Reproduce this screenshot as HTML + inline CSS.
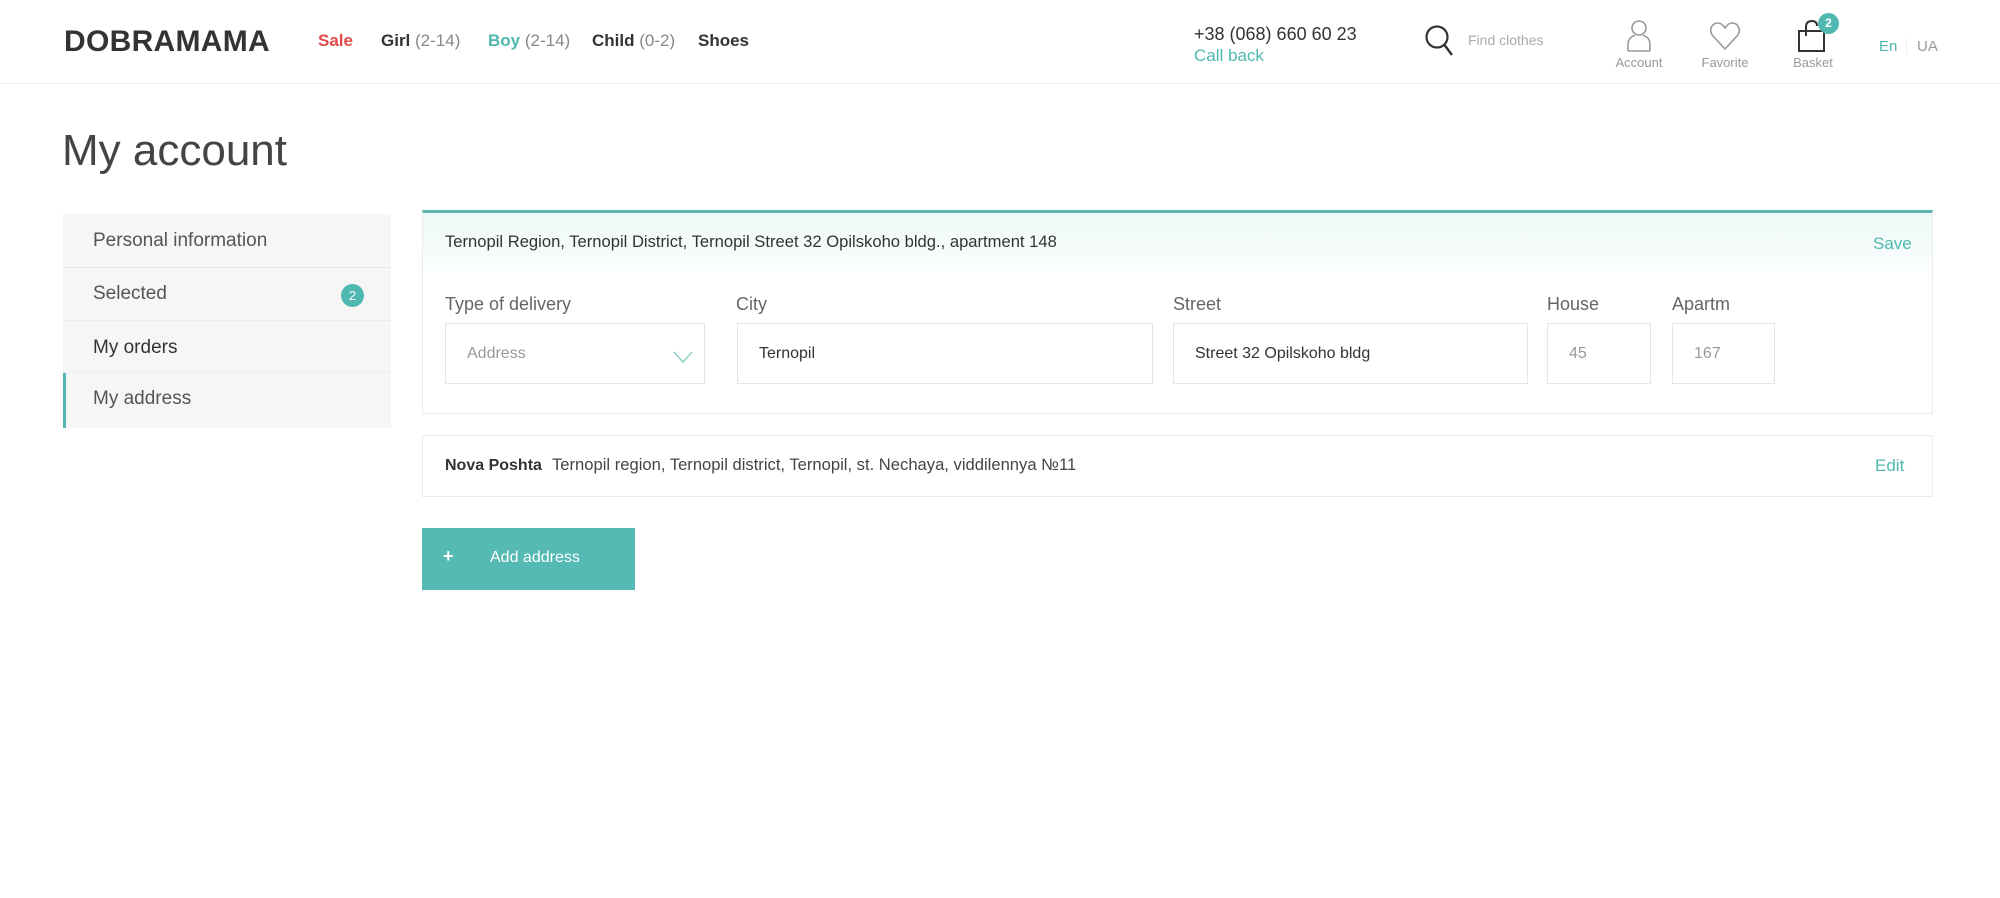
<!DOCTYPE html>
<html><head><meta charset="utf-8"><style>
*{box-sizing:border-box;margin:0;padding:0}
body{width:2000px;height:898px;background:#fff;font-family:"Liberation Sans",sans-serif;color:#333;position:relative;overflow:hidden}
.a{position:absolute;white-space:nowrap}
.teal{color:#4fb8b0}
.hdr{position:absolute;left:0;top:0;width:2000px;height:84px;border-bottom:1px solid #ececec}
.logo{left:64px;top:25px;font-size:30px;font-weight:bold;letter-spacing:0.3px;color:#333}
.nav{top:31px;font-size:17px;font-weight:bold;color:#333}
.nav span{font-weight:normal;color:#888}
.lbl{font-size:13px;color:#999;text-align:center;width:80px}
.side{position:absolute;left:63px;top:214px;width:328px;height:214px;background:#f6f6f6}
.si{position:absolute;left:30px;font-size:19px;color:#555}
.box{position:absolute;border:1px solid #ebebeb;background:#fff}
.flbl{font-size:18px;color:#666;top:294px}
.inp{position:absolute;top:323px;height:61px;border:1px solid #e6e6e6;background:#fff;font-size:16px;padding:21px 0 0 21px;color:#333}
</style></head><body>
<div class="hdr"></div>
<div class="a logo">DOBRAMAMA</div>
<div class="a nav" style="left:318px;color:#e04a48">Sale</div>
<div class="a nav" style="left:381px">Girl <span>(2-14)</span></div>
<div class="a nav teal" style="left:488px;color:#4fb8b0">Boy <span>(2-14)</span></div>
<div class="a nav" style="left:592px">Child <span>(0-2)</span></div>
<div class="a nav" style="left:698px">Shoes</div>
<div class="a" style="left:1194px;top:24px;font-size:18px;color:#333">+38 (068) 660 60 23</div>
<div class="a teal" style="left:1194px;top:46px;font-size:17px">Call back</div>
<svg class="a" style="left:1424px;top:24px" width="32" height="34" viewBox="0 0 32 34"><circle cx="13" cy="13" r="10.5" fill="none" stroke="#333" stroke-width="2.2"/><line x1="20.5" y1="21" x2="28" y2="31" stroke="#333" stroke-width="2.4"/></svg>
<div class="a" style="left:1468px;top:32px;font-size:14px;color:#aaa">Find clothes</div>
<svg class="a" style="left:1625px;top:19px" width="28" height="34" viewBox="0 0 28 34"><circle cx="14" cy="9" r="7" fill="none" stroke="#999" stroke-width="1.6"/><path d="M3 32 V26 Q3 18 10 16.5 M25 32 V26 Q25 18 18 16.5 M3 32 H25" fill="none" stroke="#999" stroke-width="1.6"/></svg>
<div class="a lbl" style="left:1599px;top:55px">Account</div>
<svg class="a" style="left:1709px;top:21px" width="32" height="30" viewBox="0 0 32 30"><path d="M16 28 L4 15 C-1 9 3 2 9 2 C12 2 14 4 16 7 C18 4 20 2 23 2 C29 2 33 9 28 15 Z" fill="none" stroke="#999" stroke-width="1.6"/></svg>
<div class="a lbl" style="left:1685px;top:55px">Favorite</div>
<svg class="a" style="left:1797px;top:19px" width="32" height="34" viewBox="0 0 32 34"><rect x="2" y="12" width="25" height="20" fill="none" stroke="#333" stroke-width="2"/><path d="M9 17 V8 Q9 2 15 2 Q20 2 20 7" fill="none" stroke="#333" stroke-width="2"/></svg>
<div class="a" style="left:1818px;top:13px;width:21px;height:21px;border-radius:50%;background:#4fb8b0;color:#fff;font-size:12px;font-weight:bold;text-align:center;line-height:21px">2</div>
<div class="a lbl" style="left:1773px;top:55px">Basket</div>
<div class="a teal" style="left:1879px;top:38px;font-size:15px">En</div>
<div class="a" style="left:1906px;top:38px;width:1px;height:16px;background:#eee"></div>
<div class="a" style="left:1917px;top:38px;font-size:15px;color:#999">UA</div>

<div class="a" style="left:62px;top:126px;font-size:44px;font-weight:300;color:#444">My account</div>

<div class="side"></div>
<div class="a" style="left:63px;top:267px;width:328px;height:1px;background:#e8e8e8"></div>
<div class="a" style="left:63px;top:320px;width:328px;height:1px;background:#ececec"></div>
<div class="a" style="left:63px;top:372px;width:328px;height:1px;background:#ececec"></div>
<div class="a" style="left:63px;top:373px;width:3px;height:55px;background:#4fb8b0"></div>
<div class="a si" style="left:93px;top:230px">Personal information</div>
<div class="a si" style="left:93px;top:283px">Selected</div>
<div class="a" style="left:341px;top:284px;width:23px;height:23px;border-radius:50%;background:#4fb8b0;color:#fff;font-size:13px;text-align:center;line-height:23px">2</div>
<div class="a si" style="left:93px;top:337px;color:#333">My orders</div>
<div class="a si teal" style="left:93px;top:388px">My address</div>

<div class="box" style="left:422px;top:210px;width:1511px;height:204px;border-top:3px solid #5fb5b3"></div>
<div class="a" style="left:423px;top:213px;width:1509px;height:62px;background:linear-gradient(#eef9f8,#f8fcfc 80%,#fff)"></div>
<div class="a" style="left:445px;top:232px;font-size:16.6px;color:#333">Ternopil Region, Ternopil District, Ternopil Street 32 Opilskoho bldg., apartment 148</div>
<div class="a teal" style="left:1873px;top:234px;font-size:17px">Save</div>
<div class="a flbl" style="left:445px">Type of delivery</div>
<div class="a flbl" style="left:736px">City</div>
<div class="a flbl" style="left:1173px">Street</div>
<div class="a flbl" style="left:1547px">House</div>
<div class="a flbl" style="left:1672px">Apartm</div>
<div class="inp" style="left:445px;width:260px;color:#999">Address</div>
<svg class="a" style="left:673px;top:351px" width="20" height="12" viewBox="0 0 20 12"><path d="M1 1 L10 11 L19 1" fill="none" stroke="#7cc8c2" stroke-width="1.3"/></svg>
<div class="inp" style="left:737px;width:416px">Ternopil</div>
<div class="inp" style="left:1173px;width:355px">Street 32 Opilskoho bldg</div>
<div class="inp" style="left:1547px;width:104px;color:#999">45</div>
<div class="inp" style="left:1672px;width:103px;color:#999">167</div>

<div class="box" style="left:422px;top:435px;width:1511px;height:62px"></div>
<div class="a" style="left:445px;top:457px;font-size:16px;font-weight:bold;color:#333">Nova Poshta</div>
<div class="a" style="left:552px;top:455px;font-size:16.6px;color:#444">Ternopil region, Ternopil district, Ternopil, st. Nechaya, viddilennya №11</div>
<div class="a teal" style="left:1875px;top:456px;font-size:17px">Edit</div>

<div class="a" style="left:422px;top:528px;width:213px;height:62px;background:#55b9b4"></div>
<div class="a" style="left:443px;top:546px;font-size:18px;font-weight:bold;color:#fff">+</div>
<div class="a" style="left:490px;top:549px;font-size:16px;color:#fff">Add address</div>
</body></html>
